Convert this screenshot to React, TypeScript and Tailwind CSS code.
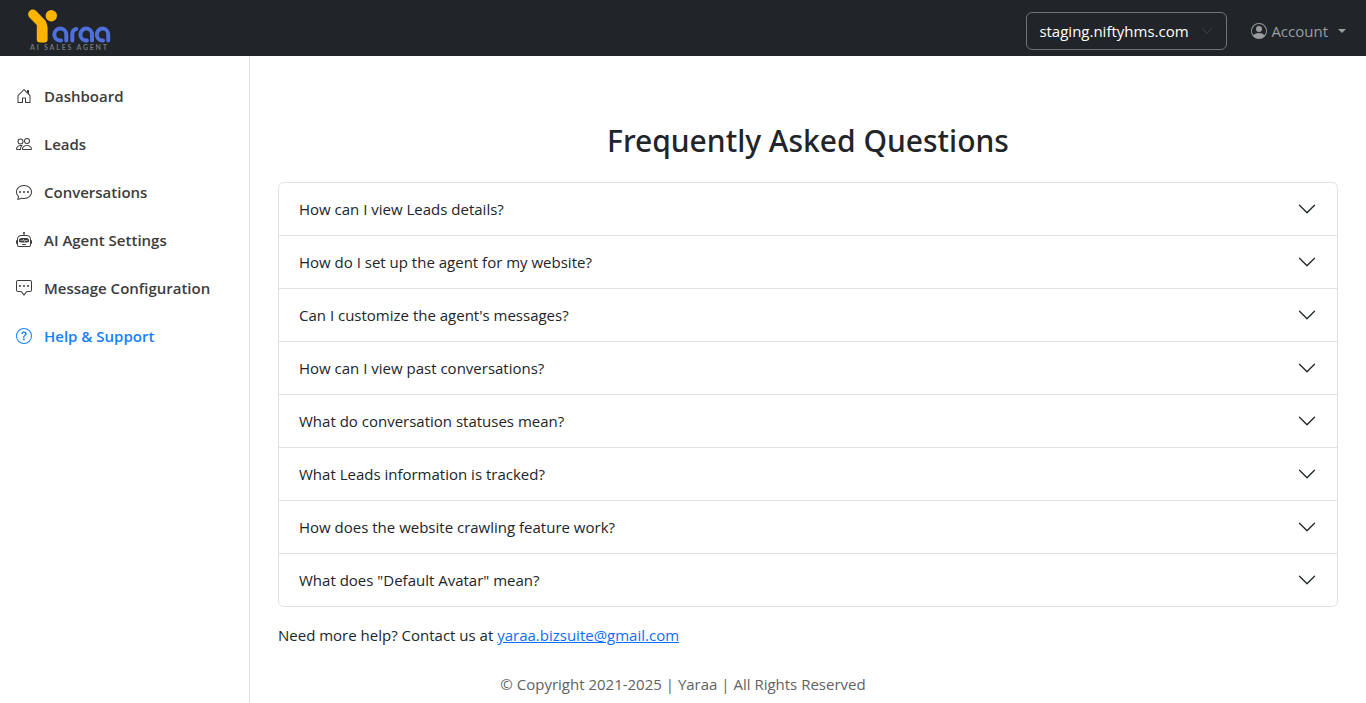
import React from "react";
import type { IconType } from "react-icons";
import {
  BsChatDots,
  BsChatSquareDots,
  BsChevronDown,
  BsHouseDoor,
  BsPeople,
  BsPersonCircle,
  BsQuestionCircle,
  BsRobot,
} from "react-icons/bs";

const navItems: { label: string; icon: IconType; active?: boolean }[] = [
  { label: "Dashboard", icon: BsHouseDoor },
  { label: "Leads", icon: BsPeople },
  { label: "Conversations", icon: BsChatDots },
  { label: "AI Agent Settings", icon: BsRobot },
  { label: "Message Configuration", icon: BsChatSquareDots },
  { label: "Help & Support", icon: BsQuestionCircle, active: true },
];

const questions = [
  "How can I view Leads details?",
  "How do I set up the agent for my website?",
  "Can I customize the agent's messages?",
  "How can I view past conversations?",
  "What do conversation statuses mean?",
  "What Leads information is tracked?",
  "How does the website crawling feature work?",
  'What does "Default Avatar" mean?',
];

function Logo() {
  return (
    <a href="#" aria-label="Yaraa AI Sales Agent" className="block">
      <svg width="84" height="44" viewBox="0 0 84 44" fill="none">
        <path d="M4.800 5.300L13.800 14.500" stroke="#ffb400" strokeWidth="9.400" strokeLinecap="round" />
        <path d="M8.800 16L14 11Q19.600 13 19.600 19V30.500Q19.600 33.400 16.500 33.400H12Q8.800 33.400 8.800 30.500Z" fill="#ffb400" />
        <circle cx="23.300" cy="6.800" r="5.700" fill="#ffb400" />
        <g stroke="#4f70dc" strokeWidth="4" strokeLinecap="round">
          <path d="M38.300 31.500V25.800a6 6 0 1 0 -6.200 5.800H33" />
          <path d="M44.300 31.500V24.500a4.600 4.600 0 0 1 4 -4.600" />
          <path d="M64 31.500V25.800a5.800 6 0 1 0 -6 5.800H59" />
          <path d="M80.200 31.500V25.800a5.700 6 0 1 0 -5.900 5.800H75" />
        </g>
        <text x="2" y="41" fill="#73777b" fontSize="7" fontWeight="700" letterSpacing="1.800" fontFamily="Lato, sans-serif">
          AI SALES AGENT
        </text>
      </svg>
    </a>
  );
}

export default function App() {
  return (
    <div className="flex min-h-screen flex-col bg-white font-['Open_Sans','Noto_Sans',sans-serif] text-[15px] leading-6 text-[#212529]">
      <header className="flex h-14 items-center justify-between bg-[#212529] pt-[6px] pr-5 pl-7">
        <Logo />
        <div className="flex items-center gap-6">
          <div className="grid items-center">
            <select
              aria-label="Website"
              className="col-start-1 row-start-1 h-[38px] w-[201px] appearance-none rounded-md border border-[#6c757d] bg-[#212529] pr-9 pl-3 font-medium text-white"
            >
              <option>staging.niftyhms.com</option>
            </select>
            <BsChevronDown className="pointer-events-none col-start-1 row-start-1 mr-[14px] size-3 justify-self-end text-[#40474e]" />
          </div>
          <button type="button" className="flex items-center gap-1 text-[#9b9d9f]">
            <BsPersonCircle className="size-4" />
            Account
            <span className="ml-[6px] border-x-4 border-t-4 border-x-transparent border-t-current" />
          </button>
        </div>
      </header>

      <div className="grid grow grid-cols-[250px_1fr] grid-rows-[1fr_auto]">
        <nav className="col-start-1 row-span-2 row-start-1 border-r border-[#dee2e6] pt-4">
          <ul>
            {navItems.map(({ label, icon: Icon, active }) => (
              <li key={label}>
                <a
                  href="#"
                  aria-current={active ? "page" : undefined}
                  className={`flex h-12 items-center gap-3 px-4 font-semibold ${active ? "text-[#1381ff]" : "text-[#3c3c3c]"}`}
                >
                  <Icon className="size-4 shrink-0" />
                  {label}
                </a>
              </li>
            ))}
          </ul>
        </nav>

        <main className="col-start-2 row-start-1 min-w-0 px-7 pt-[65px]">
          <h1 className="mb-[21px] text-center font-['Noto_Sans',sans-serif] text-3xl leading-10 font-medium">
            Frequently Asked Questions
          </h1>
          <div className="divide-y divide-[#dee2e6] rounded-md border border-[#dee2e6]">
            {questions.map((question) => (
              <button
                key={question}
                type="button"
                aria-expanded={false}
                className="flex w-full items-center justify-between px-5 py-[14px] text-left"
              >
                {question}
                <BsChevronDown className="size-5" />
              </button>
            ))}
          </div>
          <p className="mt-4">
            Need more help? Contact us at{" "}
            <a href="mailto:yaraa.bizsuite@gmail.com" className="text-[#0d6efd] underline">
              yaraa.bizsuite@gmail.com
            </a>
          </p>
        </main>

        <footer className="col-span-2 col-start-1 row-start-2 pt-5 pb-[7px] text-center text-[#5f6265]">
          © Copyright 2021-2025 | Yaraa | All Rights Reserved
        </footer>
      </div>
    </div>
  );
}
